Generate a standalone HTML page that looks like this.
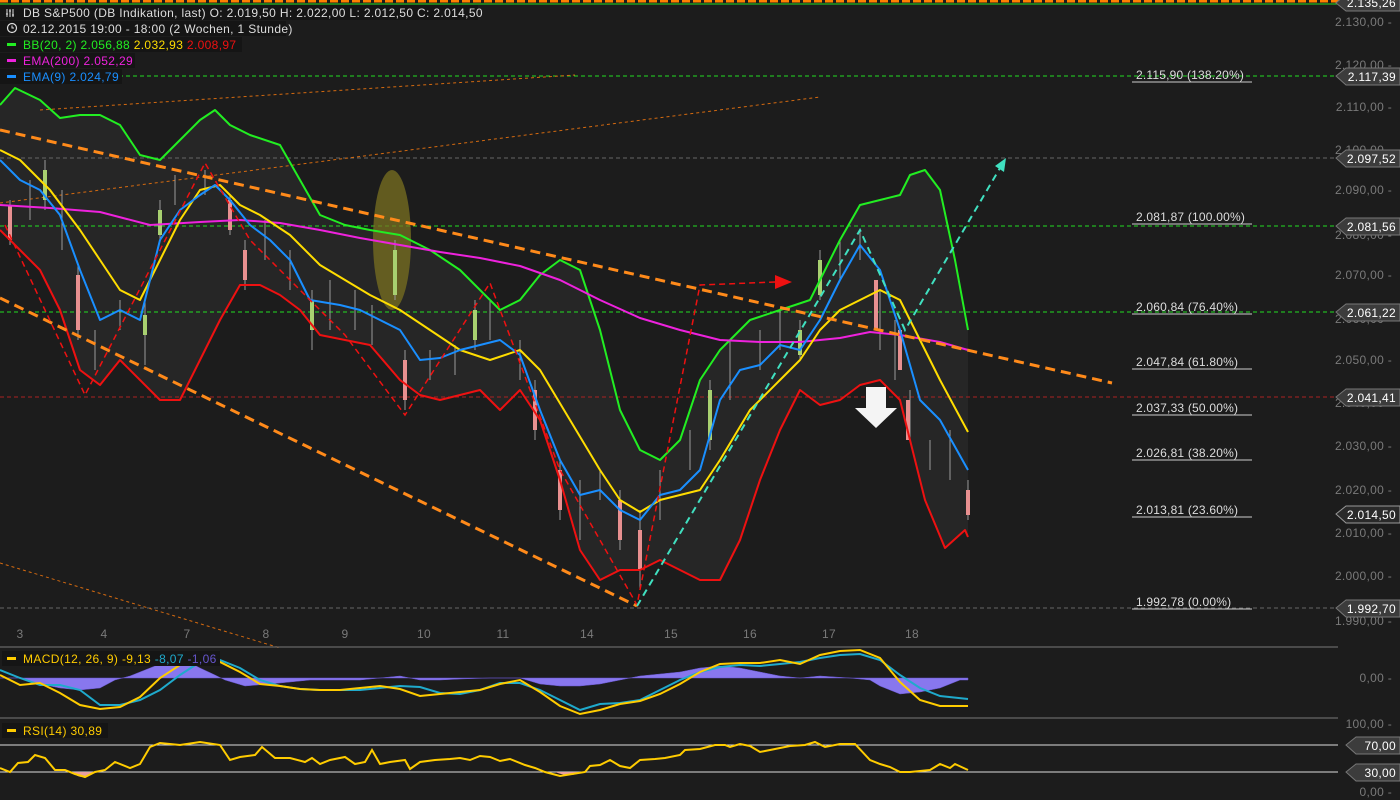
<!DOCTYPE html>
<html><head><meta charset="utf-8"><style>
html,body{margin:0;padding:0;background:#1c1c1c;width:1400px;height:800px;overflow:hidden;font-family:"Liberation Sans",sans-serif}
svg{position:absolute;left:0;top:0}
.ax{fill:#7a7a7a;font-size:12px;letter-spacing:0.3px}
.lg{font-size:12px;letter-spacing:0.35px}
.tag{fill:#fff;font-size:12px;letter-spacing:0.3px}
.fib{fill:#ddd;font-size:12px;letter-spacing:0.2px}
</style></head><body>
<svg width="1400" height="800" viewBox="0 0 1400 800">
<line x1="0" y1="1" x2="1340" y2="1" stroke="#ff8000" stroke-width="3" stroke-dasharray="8,3"/>
<line x1="0" y1="4" x2="1340" y2="4" stroke="#22dd22" stroke-width="1"/>
<polygon fill="#262626" points="0,105 15,88 40,100 60,118 80,115 100,115 120,125 140,155 160,160 180,140 200,120 215,110 230,125 250,135 280,145 300,180 320,215 345,225 370,230 400,235 430,250 460,270 480,290 500,310 520,300 540,275 560,260 580,270 600,330 620,410 640,450 660,460 680,440 700,380 720,350 750,320 780,310 810,300 840,240 860,205 880,200 900,195 910,175 925,170 940,190 955,260 968,330 968,537 965,530 945,548 925,500 910,440 900,400 880,380 860,385 840,400 820,405 800,390 780,430 760,480 740,540 720,580 700,580 680,570 660,560 640,570 620,570 600,580 580,550 560,480 540,420 520,390 500,410 480,390 460,395 440,400 420,395 400,380 370,345 345,340 320,335 300,310 280,295 260,285 240,285 220,320 200,360 180,400 160,400 140,380 120,360 100,385 80,370 60,310 40,270 20,250 0,230"/>
<g stroke-width="1" stroke-dasharray="4,3">
<line x1="0" y1="76" x2="1338" y2="76" stroke="#22dd22"/>
<line x1="0" y1="226" x2="1338" y2="226" stroke="#22dd22"/>
<line x1="0" y1="312" x2="1338" y2="312" stroke="#22dd22"/>
<line x1="0" y1="158" x2="1338" y2="158" stroke="#666"/>
<line x1="0" y1="397" x2="1338" y2="397" stroke="#aa2222"/>
<line x1="0" y1="608" x2="1338" y2="608" stroke="#666"/>
</g>
<g class="fib">
<text x="1136" y="79">2.115,90 (138.20%)</text>
<text x="1136" y="221">2.081,87 (100.00%)</text>
<text x="1136" y="311">2.060,84 (76.40%)</text>
<text x="1136" y="366">2.047,84 (61.80%)</text>
<text x="1136" y="412">2.037,33 (50.00%)</text>
<text x="1136" y="457">2.026,81 (38.20%)</text>
<text x="1136" y="514">2.013,81 (23.60%)</text>
<text x="1136" y="606">1.992,78 (0.00%)</text>
</g>
<g stroke="#ccc" stroke-width="1">
<line x1="1132" y1="82" x2="1252" y2="82"/><line x1="1132" y1="224" x2="1252" y2="224"/>
<line x1="1132" y1="314" x2="1252" y2="314"/><line x1="1132" y1="369" x2="1252" y2="369"/>
<line x1="1132" y1="415" x2="1252" y2="415"/><line x1="1132" y1="460" x2="1252" y2="460"/>
<line x1="1132" y1="517" x2="1252" y2="517"/><line x1="1132" y1="609" x2="1252" y2="609"/>
</g>
<ellipse cx="392" cy="240" rx="19" ry="70" fill="#7a7020" opacity="0.75"/>
<g stroke="#d46a10" stroke-width="1" stroke-dasharray="3,3" fill="none">
<line x1="40" y1="110" x2="575" y2="75"/>
<line x1="0" y1="203" x2="820" y2="97"/>
<line x1="0" y1="563" x2="280" y2="648"/>
</g>
<g stroke="#999" stroke-width="1">
<path d="M10 200V245M30 180V220M45 160V210M62 190V250M78 265V340M95 330V370M120 300V330M145 300V365M160 200V240M175 175V205M205 170V195M230 195V235M245 240V290M265 220V260M290 250V290M312 290V350M330 280V330M355 290V330M372 305V345M395 240V300M405 350V410M430 350V380M455 345V375M475 300V350M490 300V340M520 340V380M535 380V440M560 460V520M580 480V540M600 470V500M620 490V550M640 510V590M660 470V520M690 430V470M710 380V450M730 340V400M760 330V370M780 310V350M800 320V360M820 250V300M840 240V280M860 230V260M880 290V350M895 320V380M910 390V440M930 440V470M950 430V480M968 480V520"/>
</g>
<g>
<rect x="8" y="205" width="4" height="35" fill="#e89090"/><rect x="43" y="170" width="4" height="30" fill="#a8d070"/><rect x="76" y="275" width="4" height="55" fill="#e89090"/><rect x="143" y="315" width="4" height="20" fill="#a8d070"/><rect x="158" y="210" width="4" height="25" fill="#a8d070"/><rect x="228" y="200" width="4" height="30" fill="#e89090"/><rect x="243" y="250" width="4" height="30" fill="#e89090"/><rect x="310" y="300" width="4" height="30" fill="#a8d070"/><rect x="393" y="250" width="4" height="45" fill="#a8d070"/><rect x="403" y="360" width="4" height="40" fill="#e89090"/><rect x="473" y="310" width="4" height="30" fill="#a8d070"/><rect x="533" y="390" width="4" height="40" fill="#e89090"/><rect x="558" y="470" width="4" height="40" fill="#e89090"/><rect x="618" y="500" width="4" height="40" fill="#e89090"/><rect x="638" y="530" width="4" height="40" fill="#e89090"/><rect x="708" y="390" width="4" height="50" fill="#a8d070"/><rect x="798" y="330" width="4" height="25" fill="#a8d070"/><rect x="818" y="260" width="4" height="35" fill="#a8d070"/><rect x="874" y="280" width="4" height="50" fill="#e89090"/><rect x="898" y="330" width="4" height="40" fill="#e89090"/><rect x="906" y="400" width="4" height="40" fill="#e89090"/><rect x="966" y="490" width="4" height="25" fill="#e89090"/>
</g>
<g fill="none" stroke-width="2" stroke-linejoin="round">
<polyline stroke="#22ee22" points="0,105 15,88 40,100 60,118 80,115 100,115 120,125 140,155 160,160 180,140 200,120 215,110 230,125 250,135 280,145 300,180 320,215 345,225 370,230 400,235 430,250 460,270 480,290 500,310 520,300 540,275 560,260 580,270 600,330 620,410 640,450 660,460 680,440 700,380 720,350 750,320 780,310 810,300 840,240 860,205 880,200 900,195 910,175 925,170 940,190 955,260 968,330"/>
<polyline stroke="#ee1111" points="0,230 20,250 40,270 60,310 80,370 100,385 120,360 140,380 160,400 180,400 200,360 220,320 240,285 260,285 280,295 300,310 320,335 345,340 370,345 400,380 420,395 440,400 460,395 480,390 500,410 520,390 540,420 560,480 580,550 600,580 620,570 640,570 660,560 680,570 700,580 720,580 740,540 760,480 780,430 800,390 820,405 840,400 860,385 880,380 900,400 910,440 925,500 945,548 965,530 968,537"/>
<polyline stroke="#ee22dd" points="0,205 50,208 100,212 150,225 200,222 240,220 280,223 320,230 360,238 400,245 440,252 480,258 520,266 560,280 600,300 640,318 680,330 720,340 760,342 800,342 840,338 870,332 900,335 940,342 968,350"/>
<polyline stroke="#ffdd00" points="0,150 20,160 50,190 80,230 100,260 120,290 140,300 160,260 180,220 200,190 220,185 240,205 260,215 290,235 320,265 345,280 370,295 400,310 430,330 460,350 490,360 520,350 540,370 570,420 600,470 620,500 640,512 660,500 680,495 700,490 720,460 750,410 780,380 800,360 820,330 840,310 860,300 880,290 900,300 920,340 940,380 968,432"/>
<polyline stroke="#1a8fff" points="0,160 20,180 40,190 60,215 80,270 100,320 120,310 140,320 160,240 180,210 200,195 215,185 230,200 250,225 270,240 290,260 310,300 340,305 360,310 380,320 400,330 420,360 440,358 460,350 480,345 500,340 520,355 540,410 560,460 580,495 600,490 620,510 640,520 660,495 680,490 700,470 720,400 740,370 760,365 780,345 800,350 820,320 840,280 860,245 880,270 900,330 920,400 940,420 968,470"/>
</g>
<g stroke="#ff8a1a" stroke-width="3" stroke-dasharray="10,6">
<line x1="0" y1="130" x2="1112" y2="383"/>
<line x1="0" y1="298" x2="637" y2="606"/>
</g>
<g fill="none" stroke="#ee1111" stroke-width="1.5" stroke-dasharray="6,4">
<polyline points="5,225 85,395 205,163 250,240 345,335 405,415 490,283 560,470 637,605 700,285 775,282"/>
</g>
<polygon points="775,275 792,282 775,289" fill="#ee1111"/>
<polyline fill="none" stroke="#40e0c0" stroke-width="2" stroke-dasharray="7,5" points="637,606 860,230 905,330 1000,168"/>
<polygon points="1006,158 995,166 1004,172" fill="#40e0c0"/>
<polygon points="866,387 886,387 886,408 897,408 876,428 855,408 866,408" fill="#f4f4f4"/>
<rect x="0" y="5" width="478" height="15" fill="#151515"/>
<rect x="0" y="21" width="286" height="15" fill="#151515"/>
<rect x="0" y="37" width="242" height="15" fill="#151515"/>
<rect x="0" y="53" width="135" height="15" fill="#151515"/>
<rect x="0" y="69" width="122" height="15" fill="#151515"/>
<g class="lg">
<text x="23" y="17" fill="#ddd">DB S&amp;P500 (DB Indikation, last)  O: 2.019,50  H: 2.022,00  L: 2.012,50  C: 2.014,50</text>
<path d="M7 9V17M10 9V17M13 9V17M6 14H8M9 11H11M12 15H14" stroke="#ddd" stroke-width="1" fill="none"/>
<circle cx="12" cy="28" r="4.5" fill="none" stroke="#ddd" stroke-width="1.2"/><path d="M12 25.5V28H14" stroke="#ddd" fill="none"/>
<text x="23" y="33" fill="#ddd">02.12.2015 19:00 - 18:00 (2 Wochen, 1 Stunde)</text>
<rect x="7" y="43" width="9" height="3" fill="#22ee22"/>
<text x="23" y="49" fill="#22ee22">BB(20, 2)  2.056,88  <tspan fill="#ffdd00">2.032,93</tspan>  <tspan fill="#ee1111">2.008,97</tspan></text>
<rect x="7" y="59" width="9" height="3" fill="#ee22dd"/>
<text x="23" y="65" fill="#ee22dd">EMA(200)  2.052,29</text>
<rect x="7" y="75" width="9" height="3" fill="#1a8fff"/>
<text x="23" y="81" fill="#1a8fff">EMA(9)  2.024,79</text>
</g>
<g class="ax" text-anchor="end">
<text x="1392" y="26">2.130,00 -</text><text x="1392" y="69">2.120,00 -</text><text x="1392" y="111">2.110,00 -</text>
<text x="1392" y="154">2.100,00 -</text><text x="1392" y="194">2.090,00 -</text><text x="1392" y="239">2.080,00 -</text>
<text x="1392" y="279">2.070,00 -</text><text x="1392" y="323">2.060,00 -</text><text x="1392" y="364">2.050,00 -</text>
<text x="1392" y="407">2.040,00 -</text><text x="1392" y="450">2.030,00 -</text><text x="1392" y="494">2.020,00 -</text>
<text x="1392" y="537">2.010,00 -</text><text x="1392" y="580">2.000,00 -</text><text x="1392" y="625">1.990,00 -</text>
<text x="1392" y="682">0,00 -</text><text x="1392" y="728">100,00 -</text><text x="1392" y="796">0,00 -</text>
</g>
<g>
<path d="M1346,-6H1400V11H1346L1336,3Z" fill="#3c3c3c" stroke="#777"/>
<path d="M1346,68H1400V85H1346L1336,76Z" fill="#3c3c3c" stroke="#777"/>
<path d="M1346,150H1400V167H1346L1336,158Z" fill="#3c3c3c" stroke="#777"/>
<path d="M1346,218H1400V235H1346L1336,226Z" fill="#3c3c3c" stroke="#777"/>
<path d="M1346,304H1400V321H1346L1336,312Z" fill="#3c3c3c" stroke="#777"/>
<path d="M1346,389H1400V406H1346L1336,397Z" fill="#3c3c3c" stroke="#777"/>
<path d="M1346,506H1400V523H1346L1336,514Z" fill="#2a2a2a" stroke="#999"/>
<path d="M1346,600H1400V617H1346L1336,608Z" fill="#3c3c3c" stroke="#777"/>
<path d="M1356,737H1400V754H1356L1346,745Z" fill="#3c3c3c" stroke="#777"/>
<path d="M1356,764H1400V781H1356L1346,772Z" fill="#3c3c3c" stroke="#777"/>
</g>
<g class="tag" text-anchor="end">
<text x="1396" y="7">2.135,26</text><text x="1396" y="81">2.117,39</text><text x="1396" y="163">2.097,52</text>
<text x="1396" y="231">2.081,56</text><text x="1396" y="317">2.061,22</text><text x="1396" y="402">2.041,41</text>
<text x="1396" y="519">2.014,50</text><text x="1396" y="613">1.992,70</text>
<text x="1396" y="750">70,00</text><text x="1396" y="777">30,00</text>
</g>
<g class="ax" text-anchor="middle">
<text x="20" y="638">3</text><text x="104" y="638">4</text><text x="187" y="638">7</text><text x="266" y="638">8</text>
<text x="345" y="638">9</text><text x="424" y="638">10</text><text x="503" y="638">11</text><text x="587" y="638">14</text>
<text x="671" y="638">15</text><text x="750" y="638">16</text><text x="829" y="638">17</text><text x="912" y="638">18</text>
</g>
<line x1="0" y1="647" x2="1338" y2="647" stroke="#777"/>
<line x1="0" y1="718" x2="1338" y2="718" stroke="#777"/>
<g fill="#8877ee" stroke="#6655cc" stroke-width="0.5">
<polygon points="0,678 20,678 40,684 60,688 80,690 100,688 115,680 130,676 150,668 170,660 185,660 200,668 215,675 225,680 245,686 270,684 290,682 310,680 330,680 360,680 380,678 400,676 420,680 440,680 460,679 490,678 520,678 540,684 560,686 580,686 600,684 620,680 640,676 660,674 680,672 700,668 720,666 740,668 760,672 780,676 800,678 820,676 850,678 870,680 880,686 900,694 920,692 940,688 960,680 968,680 968,678"/>
</g>
<g fill="none" stroke-width="2">
<polyline stroke="#1faacc" points="0,670 20,678 40,685 60,685 80,690 100,705 120,705 140,700 160,690 180,675 200,662 220,660 240,668 260,680 280,686 300,689 320,690 340,690 360,690 380,688 400,686 420,687 440,693 460,694 480,690 500,683 520,683 540,690 560,700 580,710 600,704 620,703 640,700 660,690 680,680 700,672 720,667 740,665 760,666 780,664 800,662 820,658 840,655 860,654 880,660 900,675 920,688 940,696 968,699"/>
<polyline stroke="#ffcc00" points="0,675 20,685 40,683 60,693 80,705 100,709 120,707 140,697 160,678 180,665 200,657 220,662 240,672 260,684 280,686 300,689 320,690 340,690 360,688 380,686 400,689 420,696 440,694 460,692 480,690 500,684 520,680 540,692 560,706 580,714 600,710 620,704 640,701 660,694 680,684 700,672 720,664 740,663 760,663 780,660 800,664 820,655 840,651 860,650 880,658 900,682 920,700 940,706 968,706"/>
</g>
<rect x="2" y="651" width="218" height="15" fill="#151515"/>
<rect x="7" y="657" width="9" height="3" fill="#ffcc00"/>
<text x="23" y="663" class="lg" fill="#ffcc00">MACD(12, 26, 9)  -9,13  <tspan fill="#1faacc">-8,07</tspan>  <tspan fill="#6655cc">-1,06</tspan></text>
<line x1="0" y1="745" x2="1338" y2="745" stroke="#ddd"/>
<line x1="0" y1="772" x2="1338" y2="772" stroke="#ddd"/>
<path d="M72,772 Q82,782 95,772Z" fill="#e8a0a0"/>
<path d="M555,772 Q570,778 582,772Z" fill="#e8a0a0"/>
<polyline fill="none" stroke="#ffcc00" stroke-width="2" points="0,768 10,772 18,763 28,762 35,755 45,758 55,770 65,770 75,774 85,777 95,772 105,770 115,762 130,768 140,764 150,747 160,743 180,745 200,742 220,745 230,760 240,757 255,755 262,747 275,758 290,758 305,762 312,758 320,764 330,760 345,757 355,764 365,762 372,750 380,764 390,762 405,760 410,769 420,762 435,760 450,759 460,758 470,760 480,756 490,757 500,761 510,759 525,765 535,768 545,772 560,776 585,772 590,766 600,765 610,760 620,766 630,768 640,760 655,759 665,758 680,755 685,750 700,749 715,745 725,745 730,747 740,744 750,746 760,752 765,751 775,749 790,746 805,745 815,742 825,747 840,744 855,744 870,760 880,764 890,767 900,772 910,772 930,770 940,764 950,768 955,764 968,770"/>
<rect x="2" y="723" width="106" height="15" fill="#151515"/>
<rect x="7" y="729" width="9" height="3" fill="#ffcc00"/>
<text x="23" y="735" class="lg" fill="#ffcc00">RSI(14)  30,89</text>
</svg>
</body></html>
